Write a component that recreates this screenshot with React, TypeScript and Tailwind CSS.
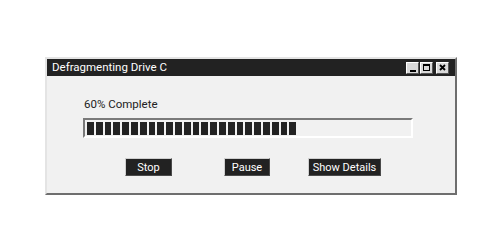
const BLOCKS = 24;

function TitleBtn({ children }: { children: React.ReactNode }) {
  return (
    <div className="w-[13px] h-[12px] bg-[#d9d9d9] border border-t-white border-l-white border-r-[#555] border-b-[#555] flex items-center justify-center">
      {children}
    </div>
  );
}

function Btn({ label, className }: { label: string; className: string }) {
  return (
    <button
      className={`h-[18px] bg-[#222] text-white text-[11px] leading-none border border-t-[#cfcfcf] border-l-[#cfcfcf] border-r-[#4a4a4a] border-b-[#4a4a4a] flex items-center justify-center ${className}`}
    >
      {label}
    </button>
  );
}

export default function App() {
  return (
    <div className="w-[500px] h-[250px] bg-white pt-[57px] pl-[45px] font-['Roboto',sans-serif]">
      <div className="w-[412px] h-[138px] bg-[#f1f1f1] border-2 border-t-[#e4e4e4] border-l-[#e4e4e4] border-r-[#6e6e6e] border-b-[#6e6e6e] flex flex-col">
        {/* title bar */}
        <div className="h-[17px] bg-[#222] flex items-center pl-[5px] pr-[6px]">
          <span className="text-white text-[11.5px] leading-none">Defragmenting Drive C</span>
          <div className="ml-auto flex items-center">
            <TitleBtn>
              <div className="w-[6px] h-[2px] bg-black mt-[6px]" />
            </TitleBtn>
            <div className="ml-[1px]">
              <TitleBtn>
                <div className="w-[7px] h-[7px] border border-black border-t-2" />
              </TitleBtn>
            </div>
            <div className="ml-[3px]">
              <TitleBtn>
                <svg width="7" height="7" viewBox="0 0 7 7">
                  <path d="M1 1L6 6M6 1L1 6" stroke="#000" strokeWidth="1.8" />
                </svg>
              </TitleBtn>
            </div>
          </div>
        </div>

        <div className="pl-[37px] pt-[21px] text-[11.5px] leading-[14px] text-[#222]">60% Complete</div>

        {/* progress bar */}
        <div className="ml-[36px] mt-[7px] w-[330px] h-[20px] border-2 border-t-[#7a7a7a] border-l-[#7a7a7a] border-r-white border-b-white flex items-center pl-[2px] gap-[2px]">
          {Array.from({ length: BLOCKS }).map((_, i) => (
            <div key={i} className="w-[6.8px] h-[13px] bg-[#222]" />
          ))}
        </div>

        <div className="flex mt-[20px]">
          <Btn label="Stop" className="ml-[78px] w-[47px]" />
          <Btn label="Pause" className="ml-[52px] w-[46px]" />
          <Btn label="Show Details" className="ml-[38px] w-[73px]" />
        </div>
      </div>
    </div>
  );
}
